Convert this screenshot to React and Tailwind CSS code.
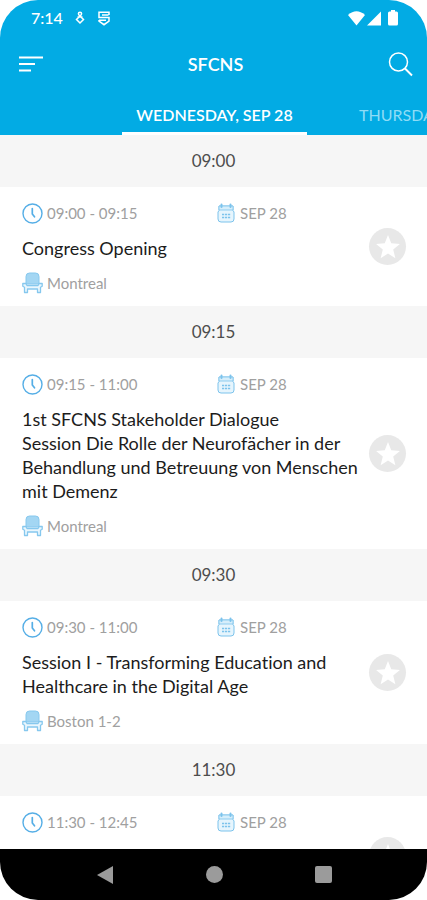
import React from 'react';

const sessions = [
    { slot: "09:00", time: "09:00 - 09:15", date: "SEP 28", title: "Congress Opening", room: "Montreal" },
    {
        slot: "09:15", time: "09:15 - 11:00", date: "SEP 28",
        title: "1st SFCNS Stakeholder Dialogue\nSession Die Rolle der Neurofächer in der Behandlung und Betreuung von Menschen mit Demenz",
        room: "Montreal"
    },
    {
        slot: "09:30", time: "09:30 - 11:00", date: "SEP 28",
        title: "Session I - Transforming Education and Healthcare in the Digital Age",
        room: "Boston 1-2"
    },
    { slot: "11:30", time: "11:30 - 12:45", date: "SEP 28", title: "", room: "" }
];

const ClockIcon = () => (
    <svg width="21" height="21" viewBox="0 0 21 21" fill="none" stroke="#55aee6" aria-hidden="true">
        <circle cx="10.5" cy="10.5" r="9.5" strokeWidth="1.4" />
        <path d="M10.3 5.500v5.500l2.200 2.800" strokeWidth="1.7" strokeLinecap="round" />
    </svg>
);

const CalendarIcon = () => (
    <svg width="18" height="20" viewBox="0 0 18 20" fill="none" stroke="#7cc3ec" aria-hidden="true">
        <path d="M2 3h14v4.500l1 1.500v7q0 3-3 3H4q-3 0-3-3V9l1-1.500z" fill="#e6f5fd" />
        <path d="M2 3h14v4H2z" fill="#d6eefb" strokeWidth="0.800" />
        <path d="M4.500 1.500v2.500M13.500 1.500v2.500" strokeWidth="2" strokeLinecap="round" />
        <path d="M5 11.500h2.200M8 11.500h2.200M11 11.500h2.200M5 14.500h2.200M8 14.500h2.200M11 14.500h2.200" strokeWidth="1.300" />
    </svg>
);

const SeatIcon = () => (
    <svg width="21" height="22" viewBox="0 0 21 22" fill="none" stroke="#86c8ee" aria-hidden="true">
        <path d="M4 12V4.500Q4 1 7.500 1h6Q17 1 17 4.500V12z" fill="#a3d6f3" />
        <path d="M.8 11.500h3l1.200 2h11l1.200-2h3v2.800l-1.700.9v5.300h-3V17h-10v3.500h-3v-5.300L.8 14.300z" fill="#e9f6fd" strokeWidth="1.300" strokeLinejoin="round" />
    </svg>
);

const StarButton = () => (
    <button aria-label="Add to favourites" className="shrink-0 w-[37px] h-[37px] rounded-full bg-[#e8e8e8] flex items-center justify-center">
        <svg width="26" height="26" viewBox="0 0 24 24" fill="#fff" aria-hidden="true">
            <path d="M12 1l3 7.600 8 .6-6.200 5.200 2 8L12 18l-6.800 4.400 2-8L1 9.200l8-.6z" />
        </svg>
    </button>
);

const StatusBar = () => (
    <div className="h-9 pl-[31px] pr-[29px] flex items-center text-white">
        <span className="text-base font-medium w-[44px]">7:14</span>
        <svg width="10" height="14" viewBox="0 0 10 14" fill="none" stroke="currentColor" strokeWidth="1.5" aria-hidden="true">
            <circle cx="5" cy="2.800" r="1.600" />
            <path d="M5 5L1.500 8.500 5 12l3.500-3.500zM2.500 6h5" />
        </svg>
        <svg className="ml-[13px]" width="12" height="15" viewBox="0 0 12 15" fill="none" stroke="currentColor" strokeWidth="1.500" aria-hidden="true">
            <path d="M11 4V1.200H1V6.500h10V10L6 13.700 1 10V9M10.500 3.900H4M1 9.300h7" />
        </svg>
        <div className="ml-auto flex items-center">
            <svg width="17" height="15" viewBox="0 0 17 15" fill="currentColor" aria-hidden="true">
                <path d="M0 4Q8.500-3.500 17 4L8.500 14.500z" />
            </svg>
            <svg className="ml-0.5" width="14" height="15" viewBox="0 0 14 15" fill="currentColor" aria-hidden="true">
                <path d="M14 .5v14H0z" />
            </svg>
            <svg className="ml-[7px]" width="10" height="16" viewBox="0 0 10 16" fill="currentColor" aria-hidden="true">
                <path d="M3 0h4v1.500h1.500Q10 1.500 10 3v11q0 1.500-1.500 1.500h-7Q0 15.500 0 14V3q0-1.500 1.500-1.500H3z" />
            </svg>
        </div>
    </div>
);

const App = () => {
    return (
        <div className="h-screen flex flex-col bg-white overflow-hidden font-[Lato,'Open_Sans',sans-serif] [font-variant-ligatures:none]">
            {/* --- HEADER --- */}
            <header className="shrink-0 bg-[#02abe4] rounded-t-[38px] overflow-hidden">
                <StatusBar />
                <div className="h-14 pl-[19px] pr-[14px] flex items-center justify-between">
                    <button aria-label="Menu" className="w-6">
                        <svg width="24" height="16" viewBox="0 0 24 16" stroke="#fff" aria-hidden="true">
                            <path d="M0 1.500h24M0 8h16M0 14.500h12" strokeWidth="1.800" />
                        </svg>
                    </button>
                    <h1 className="text-lg font-semibold text-white">SFCNS</h1>
                    <button aria-label="Search" className="w-[25px]">
                        <svg width="25" height="25" viewBox="0 0 25 25" fill="none" stroke="#fff" aria-hidden="true">
                            <circle cx="10.500" cy="10" r="9" strokeWidth="1.500" />
                            <path d="M17 16.500l7 7" strokeWidth="1.900" />
                        </svg>
                    </button>
                </div>
                <nav className="h-[43px] pl-[122px] flex items-stretch whitespace-nowrap overflow-hidden">
                    <button className="shrink-0 w-[185px] text-base font-semibold text-white border-b-[3px] border-white pt-1.5">
                        WEDNESDAY, SEP 28
                    </button>
                    <button className="shrink-0 pl-[52px] text-base text-[#8fdcf6] border-b-[3px] border-transparent pt-1.5">
                        THURSDAY
                    </button>
                </nav>
            </header>

            {/* --- PROGRAMME --- */}
            <main className="flex-1 min-h-0 overflow-hidden">
                {sessions.map((s) => (
                    <section key={s.slot}>
                        <h2 className="h-[52px] bg-[#f6f6f6] flex items-center justify-center text-[17px] text-[#4d4d4d]">{s.slot}</h2>
                        <div className="pl-[22px] pr-[21px] flex items-center">
                            <div className="flex-1 min-w-0 pt-4 pb-[13px]">
                                <div className="h-5 flex items-center text-[15px] text-[#a0a0a0]">
                                    <div className="w-[195px] flex items-center gap-1">
                                        <ClockIcon />
                                        <span>{s.time}</span>
                                    </div>
                                    <div className="flex items-center gap-[5px]">
                                        <CalendarIcon />
                                        <span>{s.date}</span>
                                    </div>
                                </div>
                                <h3 className="my-[13px] min-h-6 text-lg leading-6 text-[#1c1c1c] whitespace-pre-line">{s.title}</h3>
                                <div className="h-5 flex items-center gap-1 text-[15px] text-[#a0a0a0]">
                                    <SeatIcon />
                                    <span>{s.room}</span>
                                </div>
                            </div>
                            <StarButton />
                        </div>
                    </section>
                ))}
            </main>

            {/* --- SYSTEM NAVIGATION --- */}
            <footer className="shrink-0 h-[51px] bg-black rounded-b-[38px] flex items-center justify-center gap-[92px] text-[#9b9b9b]">
                <button aria-label="Back">
                    <svg width="18" height="20" viewBox="0 0 18 20" fill="currentColor" aria-hidden="true">
                        <path d="M17 1v18L1 10z" />
                    </svg>
                </button>
                <button aria-label="Home" className="w-[17px] h-[17px] rounded-full bg-current"></button>
                <button aria-label="Recent apps" className="w-[17px] h-[17px] rounded-xs bg-current"></button>
            </footer>
        </div>
    );
};

export default App;
